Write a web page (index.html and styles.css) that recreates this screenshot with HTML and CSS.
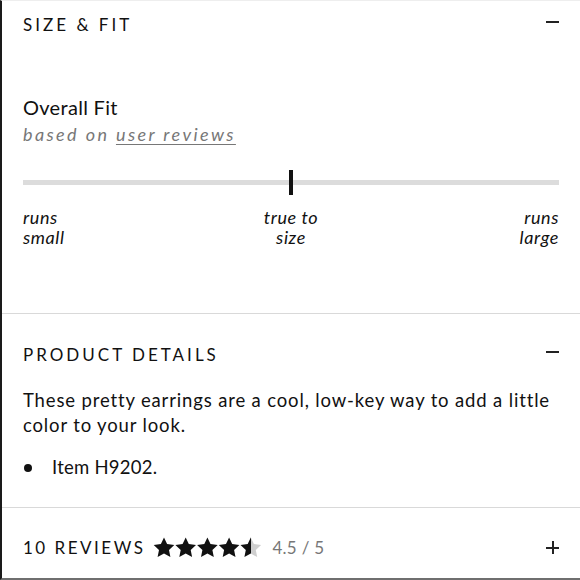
FILE: index.html
```html
<!DOCTYPE html>
<html lang="en">
<head>
<meta charset="utf-8">
<title>Size &amp; Fit</title>
<link rel="stylesheet" href="styles.css">
</head>
<body>
<div class="page">
  <section class="panel panel-fit">
    <div class="panel-head">
      <h2 class="panel-title">SIZE &amp; FIT</h2>
      <span class="icon-minus" aria-hidden="true"></span>
    </div>
    <div class="fit-title">Overall Fit</div>
    <div class="fit-sub">based on <span class="link">user reviews</span></div>
    <div class="slider">
      <div class="track"></div>
      <div class="marker" style="left: 50%"></div>
    </div>
    <div class="labels">
      <div class="label label-left">runs<br>small</div>
      <div class="label label-mid">true to<br>size</div>
      <div class="label label-right">runs<br>large</div>
    </div>
  </section>
  <section class="panel panel-details">
    <div class="panel-head">
      <h2 class="panel-title">PRODUCT DETAILS</h2>
      <span class="icon-minus" aria-hidden="true"></span>
    </div>
    <p class="details-text">These pretty earrings are a cool, low-key way to add a little color to your look.</p>
    <ul class="details-list">
      <li>Item H9202.</li>
    </ul>
  </section>
  <section class="panel panel-reviews">
    <div class="panel-head">
      <div class="reviews-left">
        <h2 class="panel-title reviews-title">10 REVIEWS</h2>
        <svg class="stars" width="110" height="21" viewBox="0 0 110 21" aria-hidden="true">
          <defs>
            <linearGradient id="half" x1="0" x2="1" y1="0" y2="0">
              <stop offset="0.5" stop-color="#111"/>
              <stop offset="0.5" stop-color="#cfcfcf"/>
            </linearGradient>
            <path id="star" d="M11 0.5l3.1 6.6 7.2.9-5.3 5 1.4 7.1L11 16.6l-6.4 3.5 1.4-7.1-5.3-5 7.2-.9z"/>
          </defs>
          <use href="#star" x="0" fill="#111"/>
          <use href="#star" x="21.7" fill="#111"/>
          <use href="#star" x="43.4" fill="#111"/>
          <use href="#star" x="65.1" fill="#111"/>
          <use href="#star" x="86.8" fill="url(#half)"/>
        </svg>
        <span class="score">4.5 / 5</span>
      </div>
      <span class="icon-plus" aria-hidden="true"></span>
    </div>
  </section>
</div>
</body>
</html>
```
FILE: styles.css
```css
* { box-sizing: border-box; }
html, body { margin: 0; padding: 0; background: #fff; }
body {
  width: 580px;
  height: 580px;
  overflow: hidden;
  font-family: "Lato", "Noto Sans", sans-serif;
  color: #111;
}
.page {
  height: 580px;
  display: flex;
  flex-direction: column;
  border-left: 2px solid #1a1a1a;
  border-top: 1px solid #eeeeee;
  border-bottom: 2px solid #6f6f6f;
}
.panel {
  padding: 0 21px 0 21px;
}
.panel + .panel {
  border-top: 1px solid #d9d9d9;
}
.panel-head {
  display: flex;
  justify-content: space-between;
  align-items: flex-start;
}
.panel-title {
  margin: 0;
  font-size: 17px;
  line-height: 20px;
  font-weight: 400;
  letter-spacing: 3px;
  color: #111;
}
.reviews-title {
  letter-spacing: 2.5px;
}
.icon-minus {
  display: block;
  width: 13px;
  height: 2px;
  margin-top: 6px;
  background: #222;
}
.icon-plus {
  position: relative;
  display: block;
  width: 13px;
  height: 13px;
  margin-top: 3px;
}
.icon-plus::before,
.icon-plus::after {
  content: "";
  position: absolute;
  background: #222;
}
.icon-plus::before { left: 0; right: 0; top: 5.5px; height: 2px; }
.icon-plus::after { top: 0; bottom: 0; left: 5.5px; width: 2px; }

.panel-fit {
  padding-top: 14px;
  padding-bottom: 66px;
}
.fit-title {
  margin-top: 60px;
  font-size: 20px;
  line-height: 24px;
  letter-spacing: 0.3px;
}
.fit-sub {
  margin-top: 5px;
  font-size: 18px;
  line-height: 20px;
  font-style: italic;
  color: #777;
  letter-spacing: 2.4px;
}
.fit-sub .link {
  text-decoration: underline;
  text-underline-offset: 3px;
  text-decoration-thickness: 1px;
}
.slider {
  position: relative;
  margin-top: 26px;
  height: 25px;
  display: flex;
  align-items: center;
}
.track {
  flex: 1;
  height: 5px;
  background: #dcdcdc;
}
.marker {
  position: absolute;
  top: 0;
  width: 4px;
  height: 25px;
  margin-left: -2px;
  background: #111;
}
.labels {
  margin-top: 12px;
  display: grid;
  grid-template-columns: 1fr auto 1fr;
  font-size: 18px;
  line-height: 20px;
  font-style: italic;
  letter-spacing: 0.6px;
}
.label-left { text-align: left; }
.label-mid { text-align: center; }
.label-right { text-align: right; }

.panel-details {
  padding-top: 31px;
  padding-bottom: 27px;
}
.details-text {
  margin: 23px 0 0;
  font-size: 18.5px;
  line-height: 25px;
  letter-spacing: 0.85px;
}
.details-list {
  margin: 17px 0 0;
  padding: 0;
  list-style: none;
  font-size: 18.5px;
  line-height: 25px;
  letter-spacing: 0.25px;
}
.details-list li {
  display: flex;
  align-items: center;
  gap: 20px;
}
.details-list li::before {
  content: "";
  width: 8px;
  height: 8px;
  border-radius: 50%;
  background: #111;
  margin-left: 1px;
}

.panel-reviews {
  flex: 1;
  padding-top: 30px;
}
.reviews-left {
  display: flex;
  align-items: center;
}
.stars {
  margin-left: 8px;
  margin-top: -2px;
}
.score {
  margin-left: 9px;
  font-size: 17px;
  line-height: 20px;
  color: #777;
  letter-spacing: 0.3px;
}
```
